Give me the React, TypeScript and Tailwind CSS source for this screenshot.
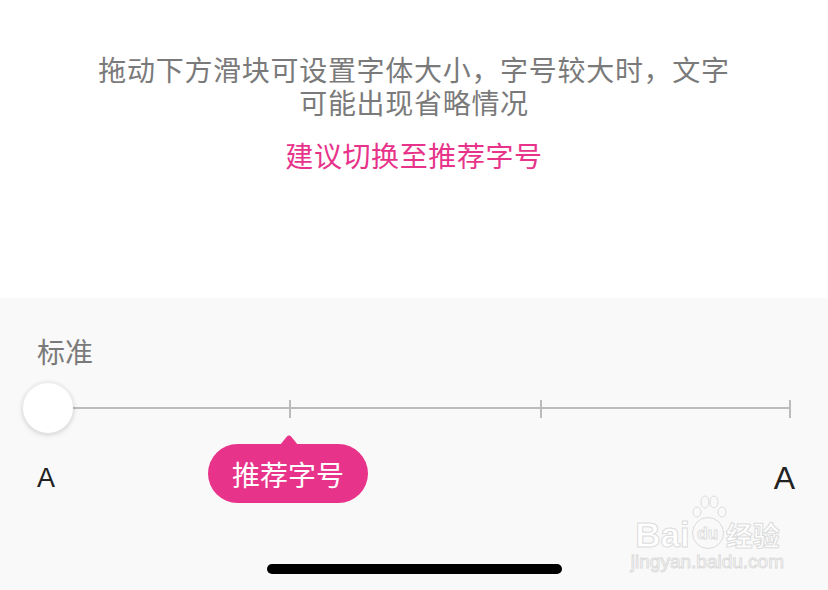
import React from "react";

const cjk = { fontFamily: '"Noto Sans CJK SC", "Noto Sans", sans-serif' };

function BaiduMark() {
  return (
    <div className="absolute right-[44px] bottom-[20px] flex flex-col items-center text-white" style={{ fontFamily: '"Liberation Sans", "Noto Sans CJK SC", sans-serif' }}>
      <div className="flex h-[32px] items-end leading-none">
        <span className="text-[35px] font-bold leading-[28px] [-webkit-text-stroke:1px_#dcdcdc]">Bai</span>
        <span className="relative mx-[2px] flex h-[32px] w-[32px] items-center justify-center rounded-full border border-[#dcdcdc] text-[17px] font-bold text-white [-webkit-text-stroke:1px_#dcdcdc]">
          du
          <svg className="absolute -top-[24px] left-[-2px]" width="36" height="26" viewBox="0 0 36 26">
            <ellipse cx="6" cy="18" rx="4" ry="5" fill="none" stroke="#dcdcdc" />
            <ellipse cx="14" cy="8" rx="4" ry="6" fill="none" stroke="#dcdcdc" />
            <ellipse cx="23" cy="8" rx="4" ry="6" fill="none" stroke="#dcdcdc" />
            <ellipse cx="31" cy="18" rx="4" ry="5" fill="none" stroke="#dcdcdc" />
          </svg>
        </span>
        <span className="text-[27px] font-bold leading-[28px] [-webkit-text-stroke:1px_#dcdcdc]" style={cjk}>经验</span>
      </div>
      <span className="mt-[5px] text-[19px] leading-[16px] [-webkit-text-stroke:1px_#dcdcdc]">jingyan.baidu.com</span>
    </div>
  );
}

export default function App() {
  return (
    <div className="flex h-[590px] w-[828px] flex-col overflow-hidden bg-white" style={cjk}>
      <div className="flex h-[298px] flex-col items-center pt-[53px]">
        <p className="w-[660px] text-center text-[28px] leading-[33px] tracking-[0.7px] text-[#7a7a7a]">
          拖动下方滑块可设置字体大小，字号较大时，文字可能出现省略情况
        </p>
        <p className="mt-[20px] text-[28px] leading-[33px] tracking-[0.6px] text-[#e8338a]">建议切换至推荐字号</p>
      </div>
      <div className="relative flex flex-1 flex-col bg-[#f9f9f9] pt-[37px]">
        <p className="pl-[37px] text-[28px] leading-[33px] text-[#7a7a7a]">标准</p>
        <div className="relative ml-[39px] mt-[15px] h-[50px] w-[752px]">
          <div className="absolute left-0 right-0 top-[24px] h-[2px] bg-[#bcbcbc]" />
          <div className="absolute left-[250px] top-[17px] h-[18px] w-[2px] bg-[#bcbcbc]" />
          <div className="absolute left-[501px] top-[17px] h-[18px] w-[2px] bg-[#bcbcbc]" />
          <div className="absolute right-0 top-[17px] h-[18px] w-[2px] bg-[#bcbcbc]" />
          <div className="absolute left-[-16px] top-0 h-[50px] w-[50px] rounded-full bg-white shadow-[0_2px_6px_rgba(0,0,0,0.12),0_0_0_3px_rgba(0,0,0,0.025)]" />
        </div>
        <div className="mt-[11px] flex h-[59px] items-center pl-[37px] pr-[33px]">
          <span className="mt-[9px] text-[27px] leading-none text-[#222]" style={{ fontFamily: '"Liberation Sans", sans-serif' }}>A</span>
          <div className="relative ml-[153px] flex h-[59px] w-[160px] items-center justify-center rounded-full bg-[#e8338a]">
            <svg className="absolute left-[72px] top-[-9px]" width="18" height="10" viewBox="0 0 18 10">
              <path d="M0 10 L6.5 2 Q9 -0.8 11.5 2 L18 10 Z" fill="#e8338a" />
            </svg>
            <span className="text-[28px] leading-none text-white">推荐字号</span>
          </div>
          <div className="flex-1" />
          <span className="mt-[8px] text-[32px] leading-none text-[#222]" style={{ fontFamily: '"Liberation Sans", sans-serif' }}>A</span>
        </div>
        <div className="mt-[61px] flex justify-center">
          <div className="ml-[1px] h-[10px] w-[295px] rounded-full bg-black" />
        </div>
        <BaiduMark />
      </div>
    </div>
  );
}
